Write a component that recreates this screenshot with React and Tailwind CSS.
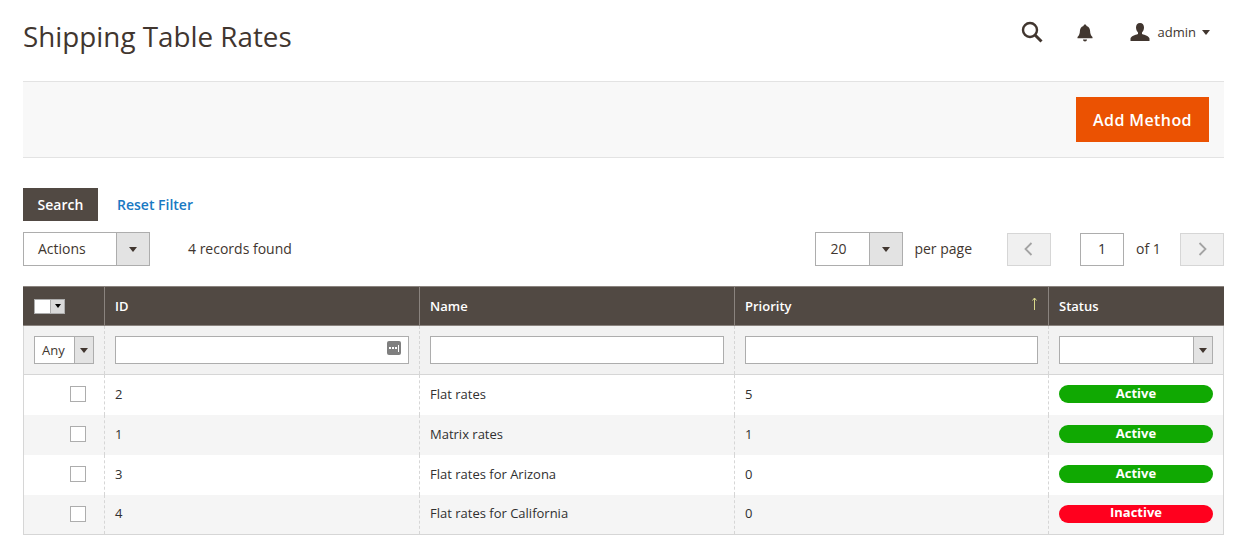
const Caret = ({ cls = "border-t-[#41362f] border-x-[4px] border-t-[5px]" }) => (
  <span className={`w-0 h-0 border-x-transparent ${cls}`} />
);

const Select = ({ label, w, arrow, h = "h-[34px]", pl = "pl-[14px] pb-[2px]", text = "text-[14px]" }) => (
  <div className={`flex ${h} ${w} border border-[#adadad] bg-white`}>
    <div className={`flex-1 flex items-center ${pl} ${text} text-[#41362f]`}>{label}</div>
    <div className={`${arrow} flex items-center justify-center bg-[#e3e3e3] border-l border-[#adadad]`}>
      <Caret />
    </div>
  </div>
);

const Chevron = ({ dir }) => (
  <svg width="10" height="14" viewBox="0 0 10 14" fill="none" stroke="#a3a3a3" strokeWidth="1.8">
    <path d={dir === "l" ? "M8.500 1 L2.500 7 L8.500 13" : "M1.500 1 L7.500 7 L1.500 13"} />
  </svg>
);

const headCols = "grid grid-cols-[81px_315px_315px_314px_1fr]";
const cols = "grid grid-cols-[80px_315px_315px_314px_1fr]";

const rows = [
  ["2", "Flat rates", "5", "Active", "h-10 bg-white", ""],
  ["1", "Matrix rates", "1", "Active", "h-10 bg-[#f5f5f5]", ""],
  ["3", "Flat rates for Arizona", "0", "Active", "h-10 bg-white", ""],
  ["4", "Flat rates for California", "0", "Inactive", "h-[39px] bg-[#f5f5f5]", "pb-[1px]"],
];

const dashed = "border-l border-dashed border-[#d6d6d6]";

export default function App() {
  return (
    <div className="w-[1244px] h-[555px] overflow-hidden bg-white font-['Open_Sans',sans-serif] text-[#41362f] px-[20px] pl-[23px]">
      <header className="h-[81px] flex items-start justify-between">
        <h1 className="text-[27.8px] leading-[36px] mt-[18px] font-normal">Shipping Table Rates</h1>
        <div className="flex items-center mt-[20px] mr-[14px] h-6">
          <svg width="22" height="22" viewBox="0 0 22 22" fill="none" stroke="#41362f" strokeWidth="2.4" className="mr-[34px]">
            <circle cx="9" cy="9" r="7" />
            <path d="M14 14 L20.5 20.5" strokeWidth="3" />
          </svg>
          <svg width="16" height="18" viewBox="0 0 16 18" fill="#41362f" className="mr-[37px] mt-[1px]">
            <path d="M8 0.5c1 0 1.400.6 1.500 1.400 2.600.7 3.500 2.800 3.600 5.200.1 2.600.6 4.300 2.400 6v1.200H.5v-1.200c1.800-1.700 2.300-3.400 2.400-6 .1-2.400 1-4.500 3.600-5.200C6.600 1.100 7 .5 8 .5z" />
            <path d="M6 15.500h4c0 1.200-.9 2-2 2s-2-.8-2-2z" />
          </svg>
          <svg width="20" height="18" viewBox="0 0 20 18" fill="#41362f" className="mr-[8px]">
            <path d="M10 0c2.600 0 4 1.800 4 4.500 0 2-1 4-2 5v1.500c3 1 7 2 7.500 4.500V18H.5v-2.500C1 13 5 12 8 11V9.500c-1-1-2-3-2-5C6 1.800 7.400 0 10 0z" />
          </svg>
          <span className="text-[13px] mr-[6px] mt-[1px] text-[#41362f]">admin</span>
          <Caret />
        </div>
      </header>

      <div className="w-[1201px] h-[77px] bg-[#f8f8f8] border-y border-[#e3e3e3] flex items-center justify-end pr-[15px]">
        <button className="w-[133px] h-[45px] bg-[#eb5202] text-white text-[16px] font-semibold tracking-[0.4px]">Add Method</button>
      </div>

      <div className="flex items-center mt-[30px] h-[33px]">
        <button className="w-[75px] h-[33px] bg-[#514943] text-white text-[14px] font-semibold">Search</button>
        <a className="ml-[19px] text-[14px] font-semibold text-[#1979c3]">Reset Filter</a>
      </div>

      <div className="w-[1201px] flex items-center mt-[11px] h-[34px]">
        <Select label="Actions" w="w-[127px]" arrow="w-[33px]" />
        <span className="ml-[38px] text-[14px] pb-[2px]">4 records found</span>
        <div className="ml-auto flex items-center">
          <Select label="20" w="w-[88px]" arrow="w-[33px]" />
          <span className="ml-[11px] text-[14px] pb-[2px]">per page</span>
          <div className="ml-[35px] w-[44px] h-[33px] bg-[#f0f0f0] border border-[#d6d6d6] flex items-center justify-center pr-[2px]"><Chevron dir="l" /></div>
          <div className="ml-[29px] w-[44px] h-[33px] border border-[#adadad] flex items-center justify-center text-[14px] text-[#303030] pb-[2px]">1</div>
          <span className="ml-[12px] w-[44px] text-[14px] pb-[2px]">of 1</span>
          <div className="w-[44px] h-[33px] bg-[#f0f0f0] border border-[#d6d6d6] flex items-center justify-center pl-[2px]"><Chevron dir="r" /></div>
        </div>
      </div>

      <div className="w-[1201px] mt-[20px] border-x border-b border-[#d6d6d6] text-[13px] text-[#303030]">
        <div className={`${headCols} h-10 bg-[#514943] border-t border-b border-[#8a837e] -mx-px text-white font-semibold`}>
          <div className="flex items-center pl-[11px]">
            <div className="flex h-[15px] w-[31px] border border-[#adadad] bg-white">
              <div className="flex-1" />
              <div className="w-[14px] bg-[#d9d9d9] border-l border-[#adadad] flex items-center justify-center"><Caret cls="border-t-black border-x-[3px] border-t-[4px]" /></div>
            </div>
          </div>
          {["ID", "Name"].map((t) => (
            <div key={t} className="flex items-center pl-[10px] pt-[1px] border-l border-[#8a837e]">{t}</div>
          ))}
          <div className="relative flex items-center pl-[10px] pt-[1px] border-l border-[#8a837e]">
            Priority
            <svg width="5" height="13" viewBox="0 0 5 13" fill="none" stroke="#d8d88a" strokeWidth="1" className="absolute right-[11px] top-[10px]">
              <path d="M2.500 13 V1 M0.500 3.500 L2.500 1 L4.500 3.500" />
            </svg>
          </div>
          <div className="flex items-center pl-[10px] pt-[1px] border-l border-[#8a837e]">Status</div>
        </div>

        <div className={`${cols} h-[49px] bg-[#f2f2f2] border-b border-[#d6d6d6] items-stretch`}>
          <div className="flex items-center pl-[10px]">
            <Select label="Any" w="w-[60px]" arrow="w-[19px]" h="h-7" pl="pl-[7px] pt-[2px]" text="text-[13px]" />
          </div>
          <div className={`${dashed} flex items-center pl-[10px]`}>
            <div className="relative w-[294px] h-7 bg-white border border-[#adadad]">
              <span className="absolute right-[7px] top-[4px] w-[14px] h-[14px] rounded-[2px] bg-[#7f7f7f] flex items-center justify-center gap-[1px]">
                <span className="w-[2px] h-[2px] bg-white" />
                <span className="w-[2px] h-[2px] bg-white" />
                <span className="w-[2px] h-[2px] bg-white" />
                <span className="w-[1px] h-[7px] bg-white" />
              </span>
            </div>
          </div>
          <div className={`${dashed} flex items-center pl-[10px]`}>
            <div className="w-[294px] h-7 bg-white border border-[#adadad]" />
          </div>
          <div className={`${dashed} flex items-center pl-[10px]`}>
            <div className="w-[293px] h-7 bg-white border border-[#adadad]" />
          </div>
          <div className={`${dashed} flex items-center pl-[10px]`}>
            <Select label="" w="w-[154px]" arrow="w-[19px]" h="h-7" />
          </div>
        </div>

        {rows.map(([id, name, pr, status, rowCls, textCls]) => (
          <div key={id} className={`${cols} ${rowCls}`}>
            <div className="flex items-center justify-end pr-[18px]">
              <div className="w-4 h-4 mb-[2px] bg-white border border-[#adadad]" />
            </div>
            <div className={`${dashed} flex items-center pl-[10px] ${textCls}`}>{id}</div>
            <div className={`${dashed} flex items-center pl-[10px] ${textCls}`}>{name}</div>
            <div className={`${dashed} flex items-center pl-[10px] ${textCls}`}>{pr}</div>
            <div className={`${dashed} flex items-center pl-[10px]`}>
              <div className={`w-[154px] h-[18px] mb-[2px] pb-[2px] rounded-full flex items-center justify-center text-white text-[13px] font-bold leading-none ${status === "Active" ? "bg-[#10a902]" : "bg-[#ff001e]"}`}>{status}</div>
            </div>
          </div>
        ))}
      </div>
    </div>
  );
}
